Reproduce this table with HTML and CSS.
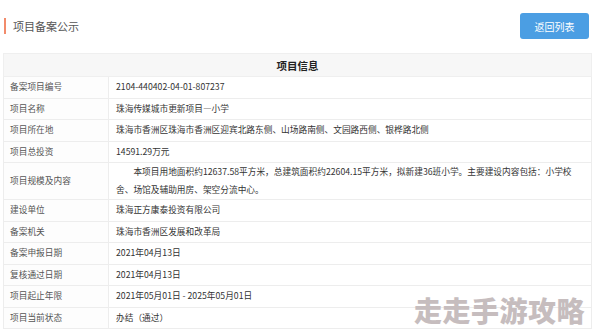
FILE: index.html
```html
<!DOCTYPE html>
<html lang="zh-CN">
<head>
<meta charset="utf-8">
<title>项目备案公示</title>
<link rel="stylesheet" href="styles.css">
</head>
<body>
<div class="page">
  <div class="topbar">
    <h1 class="title">项目备案公示</h1>
    <button class="back-btn">返回列表</button>
  </div>
  <table class="info">
    <colgroup><col class="col-label"><col></colgroup>
    <thead>
      <tr><th colspan="2">项目信息</th></tr>
    </thead>
    <tbody>
      <tr><td class="label">备案项目编号</td><td>2104-440402-04-01-807237</td></tr>
      <tr><td class="label">项目名称</td><td>珠海传媒城市更新项目—小学</td></tr>
      <tr><td class="label">项目所在地</td><td>珠海市香洲区珠海市香洲区迎宾北路东侧、山场路南侧、文园路西侧、银桦路北侧</td></tr>
      <tr><td class="label">项目总投资</td><td>14591.29万元</td></tr>
      <tr><td class="label">项目规模及内容</td><td class="desc">本项目用地面积约12637.58平方米，总建筑面积约22604.15平方米，拟新建36班小学。主要建设内容包括：小学校舍、场馆及辅助用房、架空分流中心。</td></tr>
      <tr><td class="label">建设单位</td><td>珠海正方康泰投资有限公司</td></tr>
      <tr><td class="label">备案机关</td><td>珠海市香洲区发展和改革局</td></tr>
      <tr><td class="label">备案申报日期</td><td>2021年04月13日</td></tr>
      <tr><td class="label">复核通过日期</td><td>2021年04月13日</td></tr>
      <tr><td class="label">项目起止年限</td><td>2021年05月01日 - 2025年05月01日</td></tr>
      <tr><td class="label">项目当前状态</td><td>办结（通过）</td></tr>
    </tbody>
  </table>
  <div class="watermark">走走手游攻略</div>
</div>
</body>
</html>
```
FILE: styles.css
```css
html, body {
  margin: 0;
  padding: 0;
  background: #ffffff;
}
body {
  font-family: "Noto Sans CJK SC", "Noto Sans", sans-serif;
  color: #333333;
  overflow: hidden;
}
.page {
  position: relative;
  width: 589px;
  padding: 13px 0 0 3px;
}
.topbar {
  display: flex;
  justify-content: space-between;
  align-items: center;
  height: 26px;
  margin-bottom: 14px;
}
.title {
  margin: 0 0 0 1px;
  padding-left: 7px;
  border-left: 2px solid #f28b6b;
  font-size: 11px;
  font-weight: normal;
  line-height: 16px;
  color: #555555;
}
.back-btn {
  width: 69px;
  height: 26px;
  margin-right: 3px;
  border: none;
  border-radius: 3px;
  background: #4b9ee3;
  color: #ffffff;
  font-family: inherit;
  font-size: 10px;
  padding: 0;
}
.info {
  width: 589px;
  border-collapse: collapse;
  table-layout: fixed;
  font-size: 8.7px;
}
.col-label {
  width: 105px;
}
.info th {
  height: 22px;
  padding: 0;
  background: #f7f7f7;
  border: 1px solid #efefef;
  font-size: 10.5px;
  font-weight: bold;
  color: #222222;
  text-align: center;
}
.info td {
  height: 20.5px;
  padding: 0 7px;
  border: 1px solid #ededed;
  line-height: 18px;
  vertical-align: middle;
  color: #333333;
}
.info td.label {
  padding-left: 6px;
  color: #555555;
  background: #fdfdfd;
}
.info td.desc {
  padding-right: 12px;
  text-indent: 2em;
}
.watermark {
  position: absolute;
  left: 414px;
  top: 290px;
  font-size: 28px;
  font-weight: 900;
  letter-spacing: 0.5px;
  color: #c6bdbe;
  white-space: nowrap;
}
```
